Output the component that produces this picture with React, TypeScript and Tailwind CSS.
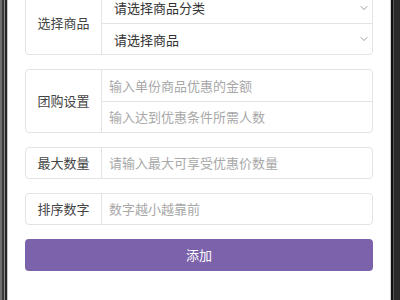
import { ChevronDown } from "lucide-react";

const font = { fontFamily: '"Noto Sans CJK SC", "Noto Sans", sans-serif' };

function Row({ children, last }: { children: React.ReactNode; last?: boolean }) {
  return (
    <div className={`flex items-center ${last ? "h-[30px]" : "h-[32px] border-b border-[#e3e3e3]"}`}>
      {children}
    </div>
  );
}

function Group({ label, children }: { label: string; children: React.ReactNode }) {
  return (
    <div className="flex border border-[#e3e3e3] rounded-[4px] bg-white">
      <div className="w-[76px] shrink-0 flex items-center justify-center border-r border-[#e3e3e3] text-[13px] text-[#444]">
        {label}
      </div>
      <div className="flex-1 flex flex-col">{children}</div>
    </div>
  );
}

function Select({ text, last }: { text: string; last?: boolean }) {
  return (
    <Row last={last}>
      <span className="pl-[12px] pt-[1px] text-[13px] leading-[14px] text-[#333] flex-1">{text}</span>
      <ChevronDown className="mr-[2px] w-[12px] h-[12px] text-[#666]" strokeWidth={1.3} />
    </Row>
  );
}

function Input({ text, last }: { text: string; last?: boolean }) {
  return (
    <Row last={last}>
      <span className="pl-[7px] text-[13px] leading-[16px] text-[#a8a8a8]">{text}</span>
    </Row>
  );
}

export default function App() {
  return (
    <div className="w-[400px] h-[300px] flex overflow-hidden bg-white" style={font}>
      <div className="flex shrink-0">
        <div className="w-[2px] bg-[#707070]" />
        <div className="w-[2px] bg-[#3a3a3a]" />
        <div className="w-[1px] bg-[#8a8a8a]" />
        <div className="w-[2px] bg-[#262626]" />
        <div className="w-[1px] bg-[#c8c8c8]" />
      </div>
      <div className="flex-1 px-[17px]">
        <div className="mt-[-9px] flex flex-col gap-[14px]">
          <Group label="选择商品">
            <Select text="请选择商品分类" />
            <Select text="请选择商品" last />
          </Group>
          <Group label="团购设置">
            <Input text="输入单份商品优惠的金额" />
            <Input text="输入达到优惠条件所需人数" last />
          </Group>
          <Group label="最大数量">
            <Input text="请输入最大可享受优惠价数量" last />
          </Group>
          <Group label="排序数字">
            <Input text="数字越小越靠前" last />
          </Group>
          <button className="h-[32px] rounded-[4px] bg-[#7c62ab] text-white text-[13px]">添加</button>
        </div>
      </div>
      <div className="flex shrink-0">
        <div className="w-[1px] bg-[#d0d0d0]" />
        <div className="w-[2px] bg-[#111]" />
        <div className="w-[1px] bg-[#555]" />
        <div className="w-[6px] bg-[#2a2a2a]" />
      </div>
    </div>
  );
}
